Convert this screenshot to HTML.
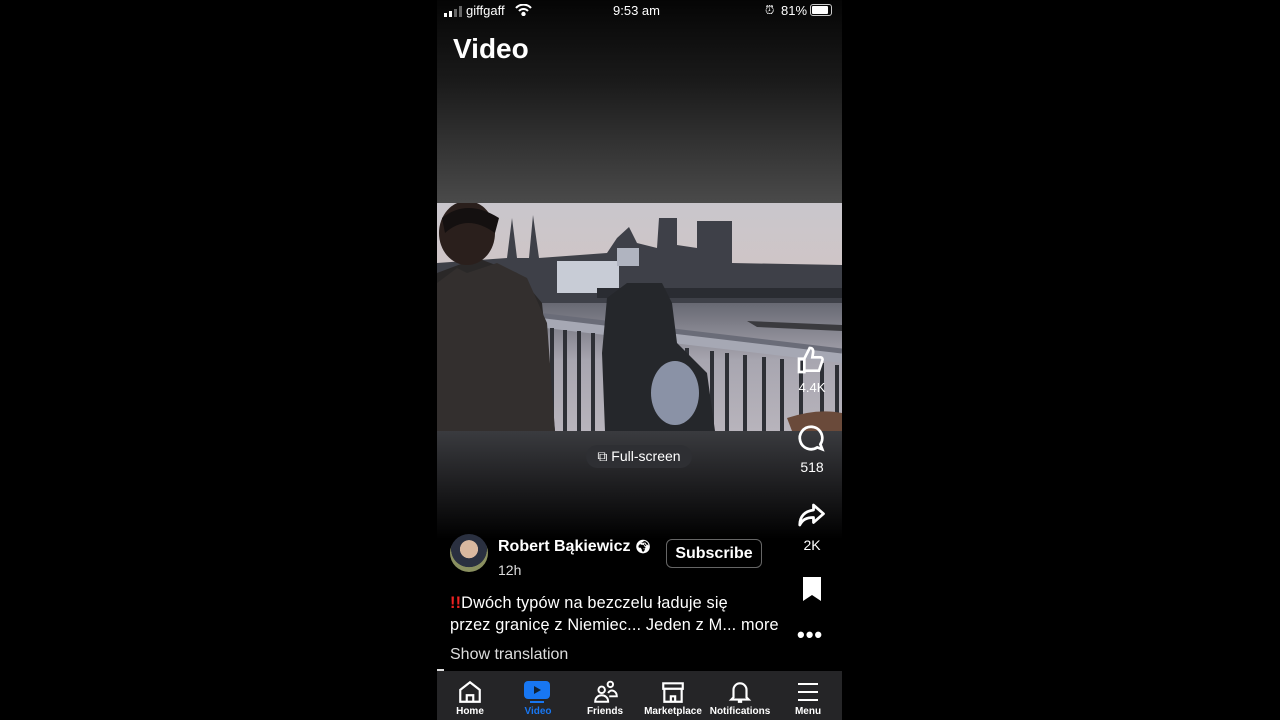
<!DOCTYPE html>
<html><head><meta charset="utf-8"><style>
body{margin:0;width:1280px;height:720px;background:#000;font-family:"Liberation Sans",sans-serif;overflow:hidden;position:relative;color:#fff}
.ph{position:absolute;left:437px;top:0;width:405px;height:720px;background:#000;overflow:hidden}
.top{position:absolute;left:0;top:0;width:405px;height:203px;background:linear-gradient(#050505 0%,#1a1a1a 40%,#4a4a4a 100%)}
.vid{position:absolute;left:0;top:203px;width:405px;height:228px;overflow:hidden}
.below{position:absolute;left:0;top:431px;width:405px;height:240px;background:linear-gradient(#3a3b3f 0%,#1a1a1c 25%,#000 45%)}
.t{position:absolute;white-space:nowrap}
.tab{position:absolute;left:0;top:671px;width:405px;height:49px;background:#252527}
.tl{position:absolute;top:35px;font-size:10px;font-weight:bold;width:70px;text-align:center}
</style></head><body>
<div class="ph">
<div class="top"></div>
<div class="vid">
<svg width="405" height="228" viewBox="0 0 405 228">
<defs>
<linearGradient id="sky" x1="0" y1="0" x2="0" y2="1"><stop offset="0" stop-color="#c9c6cc"/><stop offset="0.6" stop-color="#d6c4c0"/><stop offset="1" stop-color="#dcb8a8"/></linearGradient>
<linearGradient id="riv" x1="0" y1="0" x2="0" y2="1"><stop offset="0" stop-color="#5a5c66"/><stop offset="0.5" stop-color="#a8a6b0"/><stop offset="1" stop-color="#b8b4bc"/></linearGradient>
</defs>
<rect width="405" height="228" fill="url(#sky)"/>
<rect x="0" y="88" width="405" height="140" fill="url(#riv)"/>
<path d="M0 60 L70 55 L75 15 L80 55 L92 55 L96 12 L102 55 L170 50 L180 35 L192 24 L200 40 L220 45 L222 15 L240 15 L240 42 L260 45 L260 18 L295 18 L295 60 L405 62 L405 100 L0 100Z" fill="#3e4048"/>
<rect x="120" y="58" width="62" height="32" fill="#c8ccd6"/>
<rect x="180" y="45" width="22" height="18" fill="#b0b4c0"/>
<rect x="160" y="85" width="245" height="10" fill="#2a2c32"/>
<path d="M310 118 L405 122 L405 128 L320 124Z" fill="#3a3a3e"/>
<path d="M100 112 L405 148 L405 160 L100 124Z" fill="#a6a8b4"/>
<g stroke="#2e3036" stroke-width="4">
<path d="M115 125V228M128 127V228M142 128V228M156 130V228M170 132V228M250 145V228M275 148V228M290 150V228M308 152V228M327 154V228M345 156V228M364 158V228M385 160V228M400 162V228"/>
</g>
<path d="M100 112 L405 148" stroke="#6a6c78" stroke-width="5"/>
<path d="M0 70 L40 55 L80 70 L105 100 L118 228 L0 228Z" fill="#2a2828"/>
<path d="M0 228 L0 80 L20 65 L30 70 L60 60 L90 75 L110 120 L118 228Z" fill="#332f2e"/>
<ellipse cx="30" cy="30" rx="28" ry="32" fill="#2a1f1c"/>
<path d="M5 15 Q30 -5 62 15 L58 30 Q30 10 8 30Z" fill="#141010"/>
<path d="M168 228 L165 150 L170 95 L190 80 L225 80 L235 100 L240 140 L270 170 L278 228Z" fill="#25272b"/>
<ellipse cx="238" cy="190" rx="24" ry="32" fill="#8a92a6"/>
<path d="M350 215 Q380 205 405 210 L405 228 L355 228Z" fill="#6a4a3a"/>
</svg>
</div>
<div class="below"></div>
<svg style="position:absolute;left:7px;top:6px" width="18" height="11" viewBox="0 0 18 11"><rect x="0" y="7" width="3" height="4" fill="#fff"/><rect x="5" y="5" width="3" height="6" fill="#fff"/><rect x="10" y="3" width="3" height="8" fill="#666"/><rect x="15" y="0" width="3" height="11" fill="#666"/></svg>
<div class="t" style="left:29px;top:3px;font-size:13px">giffgaff</div>
<svg style="position:absolute;left:78px;top:4px" width="17" height="12" viewBox="0 0 17 12" fill="none" stroke="#fff" stroke-width="2"><path d="M1 4a10 10 0 0 1 15 0M4 7a6 6 0 0 1 9 0"/><circle cx="8.5" cy="10" r="1.2" fill="#fff"/></svg>
<div class="t" style="left:176px;top:3px;font-size:13px">9:53 am</div>
<div class="t" style="left:328px;top:3px;font-size:12px">⏰︎</div>
<div class="t" style="left:344px;top:3px;font-size:13px">81%</div>
<div style="position:absolute;left:373px;top:4px;width:20px;height:10px;border:1px solid #ccc;border-radius:3px"><div style="width:16px;height:8px;margin:1px;background:#fff;border-radius:1px"></div></div>
<div class="t" style="left:16px;top:33px;font-size:28px;font-weight:bold">Video</div>
<div class="t" style="left:149px;top:445px;width:106px;height:23px;border-radius:12px;background:#2e2f33;font-size:14px;line-height:23px;text-align:center">⧉ Full-screen</div>
<svg style="position:absolute;left:358px;top:344px" width="32" height="32" viewBox="0 0 24 24" fill="none" stroke="#fff" stroke-width="2"><path d="M3 11h4v10H3zM7 11l4-8c2 0 3 1 2.5 4L13 10h6c1.5 0 2 1.5 1.5 2.5L18 20H7"/></svg>
<div class="t" style="left:355px;top:380px;font-size:13px;width:40px;text-align:center">4.4K</div>
<svg style="position:absolute;left:359px;top:423px" width="30" height="30" viewBox="0 0 24 24" fill="none" stroke="#fff" stroke-width="2.2"><path d="M12 3a9 9 0 1 0 5 16.5L21 21l-1.5-4A9 9 0 0 0 12 3z"/></svg>
<div class="t" style="left:355px;top:459px;font-size:14px;width:40px;text-align:center">518</div>
<svg style="position:absolute;left:359px;top:500px" width="30" height="30" viewBox="0 0 24 24" fill="none" stroke="#fff" stroke-width="2.2" stroke-linejoin="round"><path d="M14 4l8 7-8 7v-4c-6 0-9 2-11 6 0-7 4-11 11-12z"/></svg>
<div class="t" style="left:355px;top:537px;font-size:14px;width:40px;text-align:center">2K</div>
<svg style="position:absolute;left:364px;top:575px" width="22" height="28" viewBox="0 0 22 28"><path d="M2 2h18v24l-9-6-9 6z" fill="#fff"/></svg>
<div class="t" style="left:360px;top:622px;font-size:22px;letter-spacing:1px;font-weight:bold">•••</div>
<div style="position:absolute;left:13px;top:534px;width:38px;height:38px;border-radius:50%;background:radial-gradient(circle at 50% 40%,#d9b8a0 0 30%,#2a3040 31% 60%,#8a9060 61%)"></div>
<div class="t" style="left:61px;top:538px;font-size:16px;font-weight:bold">Robert Bąkiewicz <span style="font-size:13px">🌍︎</span></div>
<div class="t" style="left:61px;top:562px;font-size:14px;color:#ddd">12h</div>
<div class="t" style="left:229px;top:539px;width:94px;height:27px;border:1px solid #666;border-radius:6px;font-size:16px;font-weight:bold;line-height:27px;text-align:center">Subscribe</div>
<div class="t" style="left:13px;top:592px;font-size:16.3px;line-height:22px;letter-spacing:0.15px"><span style="color:#e22;font-weight:bold">!!</span>Dwóch typów na bezczelu ładuje się<br>przez granicę z Niemiec... Jeden z M... more</div>
<div class="t" style="left:13px;top:646px;font-size:16px;color:#ddd">Show translation</div>
<div style="position:absolute;left:0;top:669px;width:7px;height:2px;background:#ddd"></div>
<div class="tab">
 <svg style="position:absolute;left:20px;top:8px" width="26" height="26" viewBox="0 0 24 24" fill="none" stroke="#fff" stroke-width="2"><path d="M3 10l9-7 9 7v11H3zM9 21v-6h6v6"/></svg>
 <div class="tl" style="left:-2px">Home</div>
 <svg style="position:absolute;left:87px;top:10px" width="26" height="22" viewBox="0 0 26 22"><rect x="0" y="0" width="26" height="18" rx="4" fill="#1877f2"/><path d="M10 5l7 4-7 4z" fill="#123"/><rect x="6" y="20" width="14" height="2" fill="#1877f2"/></svg>
 <div class="tl" style="left:66px;color:#1877f2">Video</div>
 <svg style="position:absolute;left:155px;top:8px" width="28" height="26" viewBox="0 0 24 24" fill="none" stroke="#fff" stroke-width="1.8"><circle cx="8" cy="10" r="3"/><circle cx="16" cy="5" r="2.5"/><path d="M2 21c0-4 3-6 6-6s6 2 6 6zM14 13c1-2 3-3 5-2s3 3 3 5h-7"/></svg>
 <div class="tl" style="left:133px">Friends</div>
 <svg style="position:absolute;left:223px;top:8px" width="26" height="26" viewBox="0 0 24 24" fill="none" stroke="#fff" stroke-width="2"><path d="M3 4h18v5H3zM4 9v12h16V9M10 21v-5h4v5"/></svg>
 <div class="tl" style="left:201px">Marketplace</div>
 <svg style="position:absolute;left:290px;top:7px" width="26" height="28" viewBox="0 0 24 24" fill="none" stroke="#fff" stroke-width="2"><path d="M6 17V10a6 6 0 0 1 12 0v7l2 2H4zM10 21h4"/></svg>
 <div class="tl" style="left:268px">Notifications</div>
 <svg style="position:absolute;left:358px;top:9px" width="26" height="24" viewBox="0 0 24 24" stroke="#fff" stroke-width="2"><path d="M2 4h20M2 12h20M2 20h20"/></svg>
 <div class="tl" style="left:336px">Menu</div>
</div>
</div>
</body></html>
